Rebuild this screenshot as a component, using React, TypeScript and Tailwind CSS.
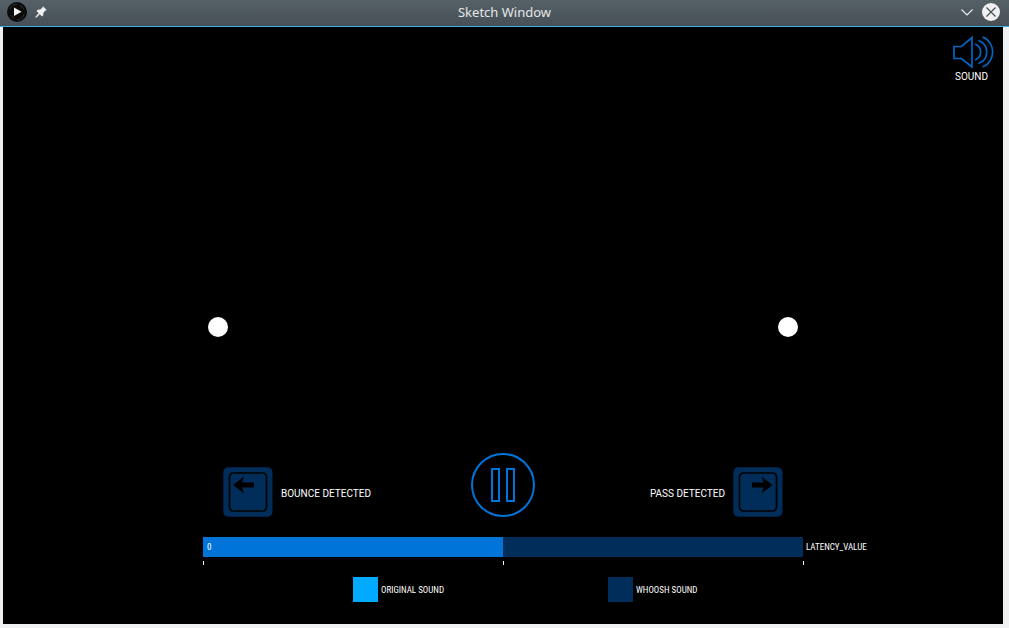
import { useState } from "react";

function TitleBar() {
  return (
    <header className="grid h-[27px] grid-cols-[1fr_auto_1fr] items-center border-b border-[#3daee9] bg-linear-to-b from-[#566067] to-[#475057] px-[7px] pb-0.5">
      <div className="flex items-center gap-2">
        <svg className="size-5" viewBox="0 0 20 20" aria-hidden="true">
          <circle cx="10" cy="10" r="10" fill="#0b0b0b" />
          <path d="M3 7a8 8 0 0 1 7-5M17 12a8 8 0 0 1-7 6M4 13l3 4M13 3l4 4" stroke="#303030" fill="none" />
          <path d="M7 5.5v8.5l7.500-4.200z" fill="#f4f4f4" />
        </svg>
        <button aria-label="Pin window">
          <svg className="size-3" viewBox="0 0 12 12" aria-hidden="true">
            <path d="M8 0.300 11.700 4 10.500 4.500 8.400 6.700 8.200 9.300 7 10.500 4.800 8.300 1.500 11.400 0.500 11.500 0.600 10.500 3.700 7.200 1.500 5 2.700 3.800 5.300 3.600 7.500 1.500z" fill="#eff0f1" />
          </svg>
        </button>
      </div>
      <h1 className="font-['Noto_Sans',sans-serif] text-[13px] leading-5 text-[#e4e6e7]">Sketch Window</h1>
      <div className="flex items-center justify-end gap-2">
        <button aria-label="Minimize">
          <svg className="h-3 w-[14px]" viewBox="0 0 14 12" aria-hidden="true">
            <path d="M1.500 3.500 7 9l5.500-5.500" fill="none" stroke="#eff0f1" strokeWidth="1.100" />
          </svg>
        </button>
        <button aria-label="Close" className="mr-0.5">
          <svg className="size-[18px]" viewBox="0 0 18 18" aria-hidden="true">
            <circle cx="9" cy="9" r="9" fill="#eff0f1" />
            <path d="m4.500 4.500 9 9m0-9-9 9" stroke="#475057" strokeWidth="1.200" />
          </svg>
        </button>
      </div>
    </header>
  );
}

function KeyIcon({ flipped = false }: { flipped?: boolean }) {
  return (
    <svg className="size-[50px]" viewBox="0 0 50 50" aria-hidden="true">
      <rect x="0.300" y="0.300" width="49.200" height="49.400" rx="5" fill="#002d5a" />
      <rect x="6.500" y="6" width="37" height="38" rx="4" fill="none" stroke="#000" strokeWidth="1.700" />
      <path
        d={flipped
          ? "M39.500 18 28.500 9.500l2 6H19v5h11.500l-2 6z"
          : "M10 18 21 9.500l-2 6H31v5H19l2 6z"}
        fill="#000"
      />
    </svg>
  );
}

function Legend({ label, swatch }: { label: string; swatch: string }) {
  return (
    <button className="flex items-center gap-[3px] leading-3">
      <span className={`size-[25px] ${swatch}`} />
      <span>{label}</span>
    </button>
  );
}

export default function App() {
  const [latency, setLatency] = useState(0);
  const [playing, setPlaying] = useState(true);

  return (
    <div className="flex min-h-screen flex-col bg-[#eff0f1] font-['Roboto',sans-serif] text-white">
      <TitleBar />
      <main className="mr-1.5 mb-1 ml-[3px] flex flex-1 flex-col bg-black pb-[22px]">
        <div className="flex justify-end px-[9px] pt-[9px]">
          <button className="flex flex-col items-center gap-[3px] text-[10px] leading-3">
            <svg className="h-8 w-[41px]" viewBox="0 0 41 32" fill="none" stroke="#0066c4" strokeWidth="1.700" aria-hidden="true">
              <path d="M8.500 10.500H1v12h7.500L19 31V1.500L8.500 10.500z" />
              <path d="M22 8c7.500 3 7.500 13 0 16M25.500 4.500c11 4 11 19 0 23M29.500 1c13.500 5 13.500 25 0 30" />
            </svg>
            <span className="pr-1">SOUND</span>
          </button>
        </div>

        <div className="grid flex-1 grid-cols-[1fr_600px_1fr]">
          <div className="col-start-2 flex items-end justify-between px-[5px] pb-[116px]">
            <span className="size-5 rounded-full bg-white" />
            <span className="size-5 rounded-full bg-white" />
          </div>
        </div>

        <div className="grid grid-cols-[1fr_600px_1fr]">
          <div className="col-start-2 grid grid-cols-[1fr_auto_1fr] items-end px-5 text-[10px] leading-3">
            <button className="flex items-center gap-2 justify-self-start">
              <KeyIcon />
              <span className="pt-1">BOUNCE DETECTED</span>
            </button>
            <button aria-label={playing ? "Pause" : "Play"} onClick={() => setPlaying(!playing)}>
              <svg className="size-16" viewBox="0 0 64 64" fill="none" stroke="#0074d9" strokeWidth="2" aria-hidden="true">
                <circle cx="32" cy="32" r="31" />
                {playing ? <path d="M21 16h7v32h-7zM36 16h7v32h-7z" /> : <path d="M24 16v32l24-16z" />}
              </svg>
            </button>
            <button className="flex items-center gap-2 justify-self-end">
              <span className="pt-1">PASS DETECTED</span>
              <KeyIcon flipped />
            </button>
          </div>
        </div>

        <div className="grid grid-cols-[1fr_600px_1fr] pt-5 font-['Roboto_Condensed','Open_Sans_Condensed','Roboto',sans-serif] text-[9px] leading-3">
          <div className="relative col-start-2 h-5">
            <input
              id="latency"
              type="range"
              min={-100}
              max={100}
              value={latency}
              onChange={(event) => setLatency(Number(event.target.value))}
              className="block h-5 w-full appearance-none [&::-webkit-slider-thumb]:appearance-none"
              style={{ background: `linear-gradient(to right, #0074d9 ${(latency + 100) / 2}%, #002d5a ${(latency + 100) / 2}%)` }}
            />
            <output htmlFor="latency" className="pointer-events-none absolute top-1 left-1">{latency}</output>
          </div>
          <label htmlFor="latency" className="self-center pl-[3px]">LATENCY_VALUE</label>
        </div>

        <div className="grid grid-cols-[1fr_601px_1fr] pt-1">
          <div className="col-start-2 flex justify-between">
            <span className="h-1 w-px bg-white" />
            <span className="h-1 w-px bg-white" />
            <span className="h-1 w-px bg-white" />
          </div>
        </div>

        <div className="grid grid-cols-[1fr_600px_1fr] pt-3 font-['Roboto_Condensed','Open_Sans_Condensed','Roboto',sans-serif] text-[9px]">
          <div className="col-start-2 grid grid-cols-[255px_auto] justify-start pl-[150px]">
            <Legend label="ORIGINAL SOUND" swatch="bg-[#00aaff]" />
            <Legend label="WHOOSH SOUND" swatch="bg-[#002d5a]" />
          </div>
        </div>
      </main>
    </div>
  );
}
